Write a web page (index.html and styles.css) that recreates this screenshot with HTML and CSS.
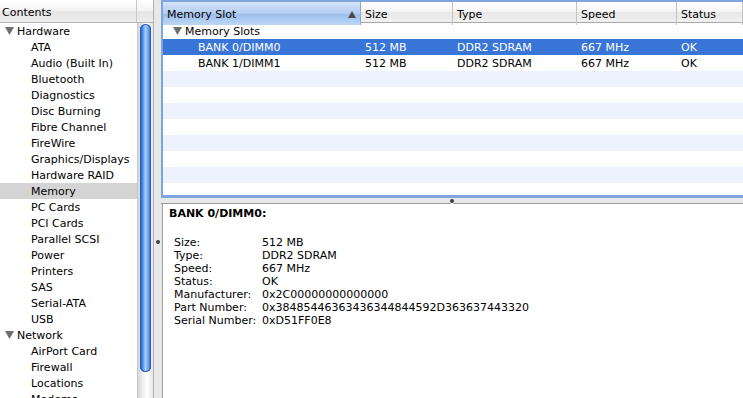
FILE: index.html
```html
<!DOCTYPE html>
<html lang="en">
<head>
  <meta charset="UTF-8">
  <title>System Profiler - Memory</title>
  <link rel="stylesheet" href="styles.css">
</head>
<body>

<div class="window">
  <!-- Colonne de gauche : contenu -->
  <div class="sidebar">
    <div class="side-head">
      <div class="side-title">Contents</div>
      <div class="side-corner"></div>
    </div>
    <div class="side-body">
      <ul class="tree">
        <li class="group"><svg class="tri" viewBox="0 0 9 8"><polygon points="0,0 9,0 4.5,8"/></svg>Hardware</li>
        <li>ATA</li>
        <li>Audio (Built In)</li>
        <li>Bluetooth</li>
        <li>Diagnostics</li>
        <li>Disc Burning</li>
        <li>Fibre Channel</li>
        <li>FireWire</li>
        <li>Graphics/Displays</li>
        <li>Hardware RAID</li>
        <li class="current">Memory</li>
        <li>PC Cards</li>
        <li>PCI Cards</li>
        <li>Parallel SCSI</li>
        <li>Power</li>
        <li>Printers</li>
        <li>SAS</li>
        <li>Serial-ATA</li>
        <li>USB</li>
        <li class="group"><svg class="tri" viewBox="0 0 9 8"><polygon points="0,0 9,0 4.5,8"/></svg>Network</li>
        <li>AirPort Card</li>
        <li>Firewall</li>
        <li>Locations</li>
        <li>Modems</li>
      </ul>
      <div class="scrollbar">
        <div class="thumb"></div>
      </div>
    </div>
  </div>

  <div class="vsplit"><span class="grip"></span></div>

  <!-- Partie droite : tableau + détails -->
  <div class="main">
    <div class="table-pane">
      <div class="thead">
        <div class="th sorted">Memory Slot<svg class="sort" viewBox="0 0 8 7"><polygon points="4,0 8,7 0,7"/></svg></div>
        <div class="th">Size</div>
        <div class="th">Type</div>
        <div class="th">Speed</div>
        <div class="th">Status</div>
      </div>
      <div class="rows">
        <div class="tr">
          <div class="td slot-group"><svg class="tri" viewBox="0 0 9 8"><polygon points="0,0 9,0 4.5,8"/></svg>Memory Slots</div>
          <div class="td"></div><div class="td"></div><div class="td"></div><div class="td"></div>
        </div>
        <div class="tr selected">
          <div class="td slot">BANK 0/DIMM0</div>
          <div class="td">512 MB</div>
          <div class="td">DDR2 SDRAM</div>
          <div class="td">667 MHz</div>
          <div class="td">OK</div>
        </div>
        <div class="tr">
          <div class="td slot">BANK 1/DIMM1</div>
          <div class="td">512 MB</div>
          <div class="td">DDR2 SDRAM</div>
          <div class="td">667 MHz</div>
          <div class="td">OK</div>
        </div>
        <div class="tr stripe"></div>
        <div class="tr"></div>
        <div class="tr stripe"></div>
        <div class="tr"></div>
        <div class="tr stripe"></div>
        <div class="tr"></div>
        <div class="tr stripe"></div>
        <div class="tr last"></div>
      </div>
    </div>

    <div class="hsplit"><span class="grip"></span></div>

    <div class="detail">
      <h3>BANK 0/DIMM0:</h3>
      <dl class="props">
        <dt>Size:</dt><dd>512 MB</dd>
        <dt>Type:</dt><dd>DDR2 SDRAM</dd>
        <dt>Speed:</dt><dd>667 MHz</dd>
        <dt>Status:</dt><dd>OK</dd>
        <dt>Manufacturer:</dt><dd>0x2C00000000000000</dd>
        <dt>Part Number:</dt><dd>0x38485446363436344844592D363637443320</dd>
        <dt>Serial Number:</dt><dd>0xD51FF0E8</dd>
      </dl>
    </div>
  </div>
</div>

</body>
</html>
```

FILE: styles.css
```css
body {
  margin: 0;
  font-family: "DejaVu Sans", sans-serif;
  font-size: 11px;
  color: #000;
  background-color: #e8e8e8;
  overflow: hidden;
}
.window {
  display: flex;
  width: 743px;
  height: 398px;
  overflow: hidden;
}

/* Colonne de gauche */
.sidebar {
  width: 153px;
  display: flex;
  flex-direction: column;
  background-color: #fff;
}
.side-head {
  display: flex;
  height: 22px;
  border-bottom: 1px solid #b5b5b5;
  background: linear-gradient(#ffffff, #f3f3f3 50%, #e6e6e6 51%, #ececec);
}
.side-title {
  width: 134px;
  padding: 3px 0 0 2px;
  line-height: 19px;
  border-right: 1px solid #c8c8c8;
}
.side-corner {
  flex: 1;
}
.side-body {
  flex: 1;
  display: flex;
  min-height: 0;
}
.tree {
  list-style: none;
  margin: 0;
  padding: 0;
  width: 137px;
  overflow: hidden;
}
.tree li {
  height: 16px;
  line-height: 18px;
  padding-left: 31px;
  white-space: nowrap;
}
.tree li.group {
  padding-left: 5px;
}
.tree li.current {
  background-color: #d4d4d4;
}
.tri {
  width: 9px;
  height: 8px;
  margin-right: 3px;
  fill: #6e6e6e;
}
.scrollbar {
  width: 16px;
  padding: 1px 2px 0 2px;
  box-sizing: border-box;
  border-left: 1px solid #c8c8c8;
  background: linear-gradient(to right, #d8d8d8, #f4f4f4 40%, #ffffff 60%, #e6e6e6);
}
.thumb {
  height: 348px;
  border-radius: 6px;
  background: linear-gradient(to right, #1c4fb0, #4f8fe8 25%, #a9cdf8 50%, #6aa4f0 75%, #2458c0);
  box-shadow: inset 0 0 0 1px #2a5cb8;
}

/* Séparateurs */
.vsplit {
  width: 8px;
  border-left: 1px solid #b0b0b0;
  background-color: #e8e8e8;
  display: flex;
  justify-content: center;
  padding-top: 240px;
  box-sizing: border-box;
}
.grip {
  width: 4px;
  height: 4px;
  border-radius: 50%;
  background-color: #3c3c3c;
  box-shadow: 0 1px 0 #ffffff;
}
.hsplit {
  height: 5px;
  background-color: #e8e8e8;
  display: flex;
  justify-content: center;
  align-items: center;
  border-bottom: 1px solid #9a9a9a;
}

/* Tableau */
.main {
  flex: 1;
  display: flex;
  flex-direction: column;
  min-width: 0;
}
.table-pane {
  height: 198px;
  box-sizing: border-box;
  border: 2px solid #7fa6dc;
  border-right: none;
  border-bottom-width: 3px;
  background-color: #fff;
  overflow: hidden;
}
.thead,
.tr {
  display: grid;
  grid-template-columns: 198px 92px 124px 100px 1fr;
}
.thead {
  height: 20px;
  border-bottom: 1px solid #a8a8a8;
  background: linear-gradient(#ffffff, #f4f4f4 50%, #e8e8e8 51%, #f0f0f0);
}
.th {
  line-height: 20px;
  padding: 3px 0 0 4px;
  box-sizing: border-box;
  border-right: 1px solid #c2c2c2;
  white-space: nowrap;
  display: flex;
  align-items: center;
}
.th.sorted {
  background: linear-gradient(#d3e3f8, #b3cdf1 50%, #9dbeea 51%, #bcd6f6);
  border-right-color: #8aa8d0;
}
.sort {
  width: 8px;
  height: 7px;
  margin: -2px 4px 0 auto;
  fill: #4a4a4a;
}
.tr {
  height: 16px;
  line-height: 18px;
}
.tr.stripe {
  background-color: #edf3fe;
}
.tr.last {
  height: 12px;
}
.tr.selected {
  background-color: #3875d7;
  color: #fff;
}
.td {
  padding-left: 4px;
  white-space: nowrap;
}
.td.slot-group {
  padding-left: 10px;
}
.td.slot {
  padding-left: 35px;
}

/* Détails */
.detail {
  flex: 1;
  margin-left: 1px;
  border-left: 1px solid #a0a0a0;
  background-color: #fff;
  padding: 2px 0 0 6px;
}
.detail h3 {
  margin: 0 0 14px 0;
  font-size: 11px;
  line-height: 16px;
}
.props {
  display: grid;
  grid-template-columns: 88px 1fr;
  margin: 0 0 0 5px;
  line-height: 13px;
}
.props dd {
  margin: 0;
}
```
